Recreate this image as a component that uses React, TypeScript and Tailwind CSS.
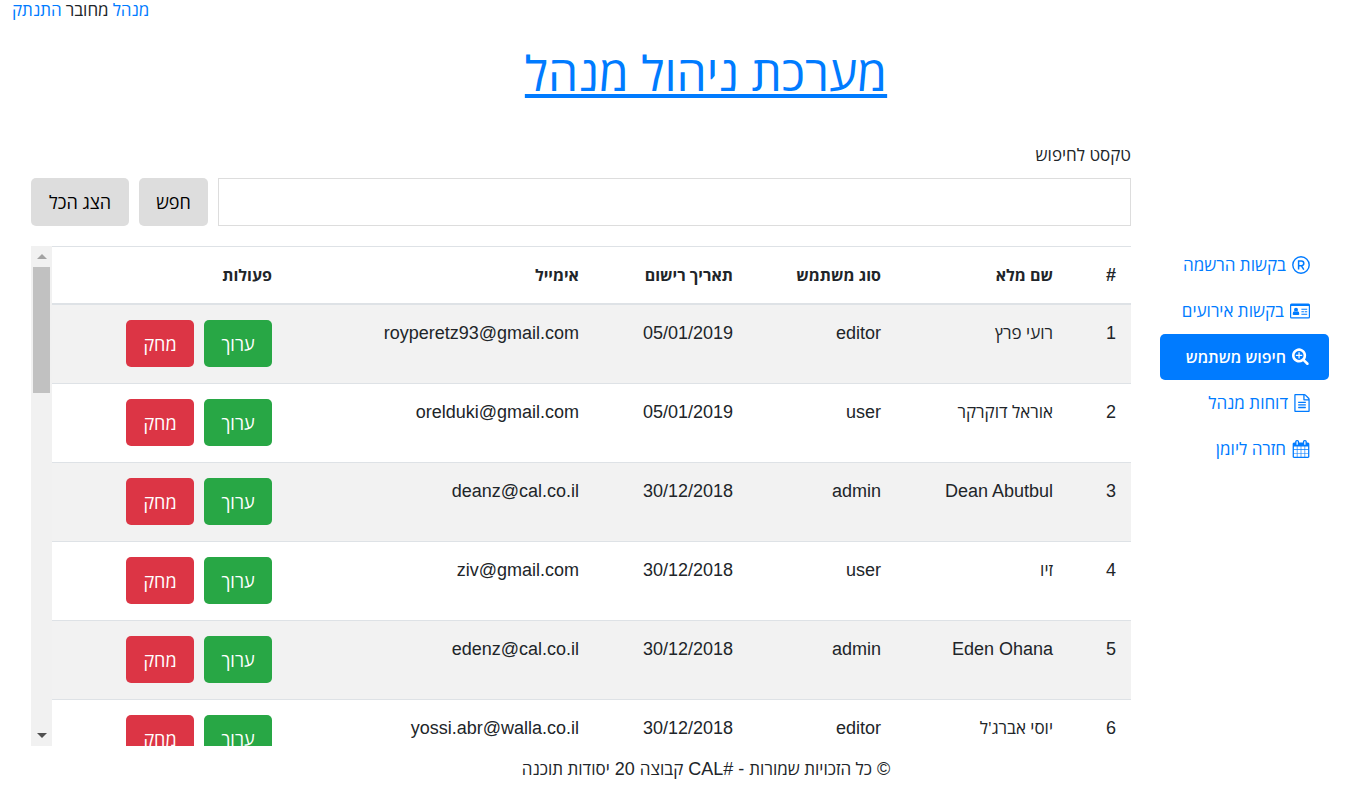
import { useRef, useState } from "react";
import type { ReactNode } from "react";

type User = { id: number; name: string; role: string; date: string; email: string };

const users: User[] = [
  { id: 1, name: "רועי פרץ", role: "editor", date: "05/01/2019", email: "royperetz93@gmail.com" },
  { id: 2, name: "אוראל דוקרקר", role: "user", date: "05/01/2019", email: "orelduki@gmail.com" },
  { id: 3, name: "Dean Abutbul", role: "admin", date: "30/12/2018", email: "deanz@cal.co.il" },
  { id: 4, name: "זיו", role: "user", date: "30/12/2018", email: "ziv@gmail.com" },
  { id: 5, name: "Eden Ohana", role: "admin", date: "30/12/2018", email: "edenz@cal.co.il" },
  { id: 6, name: "יוסי אברג'ל", role: "editor", date: "30/12/2018", email: "yossi.abr@walla.co.il" },
];

const he = "font-['Open_Sans','Liberation_Sans',sans-serif]";

function Glyph({ d, className }: { d: string; className: string }) {
  return (
    <svg viewBox="0 0 1792 1792" className={className} fill="currentColor" aria-hidden="true">
      <path d={d} />
    </svg>
  );
}

const searchPlus =
  "M1024 704v64q0 13-9.5 22.5t-22.5 9.5h-224v224q0 13-9.5 22.5t-22.5 9.5h-64q-13 0-22.5-9.5t-9.5-22.5v-224h-224q-13 0-22.5-9.5t-9.5-22.5v-64q0-13 9.5-22.5t22.5-9.5h224v-224q0-13 9.5-22.5t22.5-9.5h64q13 0 22.5 9.5t9.5 22.5v224h224q13 0 22.5 9.5t9.5 22.5zm128 32q0-185-131.5-316.5t-316.5-131.5-316.5 131.5-131.5 316.5 131.5 316.5 316.5 131.5 316.5-131.5 131.5-316.5zm512 832q0 53-37.5 90.5t-90.5 37.5q-54 0-90-38l-343-342q-179 124-399 124-143 0-273.5-55.5t-225-150-150-225-55.5-273.5 55.5-273.5 150-225 225-150 273.5-55.5 273.5 55.5 225 150 150 225 55.5 273.5q0 220-124 399l343 343q37 37 37 90z";
const fileText =
  "M1596 380q28 28 48 76t20 88v1152q0 40-28 68t-68 28h-1344q-40 0-68-28t-28-68v-1600q0-40 28-68t68-28h896q40 0 88 20t76 48zm-444-244v376h376q-10-29-22-41l-313-313q-12-12-41-22zm384 1528v-1024h-416q-40 0-68-28t-28-68v-416h-768v1536h1280zm-1024-864q0-14 9-23t23-9h704q14 0 23 9t9 23v64q0 14-9 23t-23 9h-704q-14 0-23-9t-9-23v-64zm736 224q14 0 23 9t9 23v64q0 14-9 23t-23 9h-704q-14 0-23-9t-9-23v-64q0-14 9-23t23-9h704zm0 256q14 0 23 9t9 23v64q0 14-9 23t-23 9h-704q-14 0-23-9t-9-23v-64q0-14 9-23t23-9h704z";
const calendar =
  "M192 1664h288v-288h-288v288zm352 0h320v-288h-320v288zm-352-352h288v-320h-288v320zm352 0h320v-320h-320v320zm-352-384h288v-288h-288v288zm736 736h320v-288h-320v288zm-384-736h320v-288h-320v288zm768 736h288v-288h-288v288zm-384-352h320v-320h-320v320zm-352-864v-288q0-13-9.5-22.5t-22.5-9.5h-64q-13 0-22.5 9.5t-9.5 22.5v288q0 13 9.5 22.5t22.5 9.5h64q13 0 22.5-9.5t9.5-22.5zm736 864h288v-320h-288v320zm-384-384h320v-288h-320v288zm384 0h288v-288h-288v288zm32-480v-288q0-13-9.5-22.5t-22.5-9.5h-64q-13 0-22.5 9.5t-9.5 22.5v288q0 13 9.5 22.5t22.5 9.5h64q13 0 22.5-9.5t9.5-22.5zm384-64v1280q0 52-38 90t-90 38h-1408q-52 0-90-38t-38-90v-1280q0-52 38-90t90-38h128v-96q0-66 47-113t113-47h64q66 0 113 47t47 113v96h384v-96q0-66 47-113t113-47h64q66 0 113 47t47 113v96h128q52 0 90 38t38 90z";

function RegisteredIcon() {
  return (
    <svg viewBox="0 0 18 18" className="size-[18px]" fill="none" stroke="currentColor" aria-hidden="true">
      <circle cx="9" cy="9" r="8.2" strokeWidth="1.4" />
      <path d="M6.6 13.6V4.9h2.8a2.4 2.4 0 0 1 0 4.8H6.6M9.3 9.7l2.5 3.9" strokeWidth="1.5" />
    </svg>
  );
}

function AddressCardIcon() {
  return (
    <svg viewBox="0 0 20 16" className="h-4 w-5" fill="currentColor" aria-hidden="true">
      <path
        fillRule="evenodd"
        d="M1.5 .5h17A1.5 1.5 0 0 1 20 2v12a1.5 1.5 0 0 1-1.5 1.5h-17A1.5 1.5 0 0 1 0 14V2A1.5 1.5 0 0 1 1.5 .5zM1.200 3v11q0 .3.3.3h17q.3 0 .3-.3V3z"
      />
      <circle cx="6" cy="6.800" r="2" />
      <path d="M4.300 8.300q1.700 1.400 3.400 0 1.600.3 1.600 2.700 0 1-1 1H3.700q-1 0-1-1 0-2.400 1.600-2.700z" />
      <path d="M11.4 5.700h5.800v1.100h-5.800zM11.400 8.200h2.500v1.100h-2.500zM14.700 8.200h2.500v1.100h-2.500zM11.400 10.700h5.800v1.100h-5.800z" />
    </svg>
  );
}

const nav: { label: string; icon: ReactNode; active?: boolean }[] = [
  { label: "בקשות הרשמה", icon: <RegisteredIcon /> },
  { label: "בקשות אירועים", icon: <AddressCardIcon /> },
  { label: "חיפוש משתמש", icon: <Glyph d={searchPlus} className="size-[18px]" />, active: true },
  { label: "דוחות מנהל", icon: <Glyph d={fileText} className="-mx-px size-[18px]" /> },
  { label: "חזרה ליומן", icon: <Glyph d={calendar} className="size-[18px]" /> },
];

function UserTable() {
  const box = useRef<HTMLDivElement>(null);
  const [offset, setOffset] = useState(0);

  const onScroll = () => {
    const el = box.current;
    if (!el) return;
    const range = el.scrollHeight - el.clientHeight;
    setOffset(range > 0 ? (el.scrollTop / range) * 332 : 0);
  };
  const step = (dy: number) => box.current?.scrollBy({ top: dy });

  return (
    <div className="mt-5 flex h-[500px]">
      <div
        ref={box}
        onScroll={onScroll}
        className="min-w-0 flex-1 overflow-y-auto [scrollbar-width:none]"
      >
        <table className="w-full table-fixed border-separate border-spacing-0 text-right leading-[26px]">
          <colgroup>
            <col className="w-[63px]" />
            <col className="w-[172px]" />
            <col className="w-[148px]" />
            <col className="w-[154px]" />
            <col className="w-[307px]" />
            <col />
          </colgroup>
          <thead>
            <tr>
              {["#", "שם מלא", "סוג משתמש", "תאריך רישום", "אימייל", "פעולות"].map((h) => (
                <th
                  key={h}
                  scope="col"
                  className={`border-y border-[#dee2e6] px-[15px] py-[15px] font-bold ${
                    h === "#" ? "" : `text-base leading-[26px] ${he}`
                  }`}
                >
                  {h}
                </th>
              ))}
            </tr>
          </thead>
          <tbody className="[&_td]:border-t [&_td]:border-[#dee2e6] [&_td]:px-[15px] [&_td]:pt-[15px] [&_td]:pb-4 [&_td]:align-top">
            {users.map((u) => (
              <tr key={u.id} className="odd:bg-[#f2f2f2]">
                <td>{u.id}</td>
                <td className={/[A-Z]/.test(u.name) ? "" : `text-[17px] leading-[26px] ${he}`}>{u.name}</td>
                <td>{u.role}</td>
                <td>{u.date}</td>
                <td>{u.email}</td>
                <td>
                  <div className={`flex gap-[10px] text-lg font-medium text-white ${he}`}>
                    <button type="button" className="h-[47px] w-[68px] rounded-[5px] bg-[#28a745]">
                      ערוך
                    </button>
                    <button type="button" className="h-[47px] w-[68px] rounded-[5px] bg-[#dc3545]">
                      מחק
                    </button>
                  </div>
                </td>
              </tr>
            ))}
          </tbody>
        </table>
      </div>
      <div className="flex w-[21px] flex-col items-center bg-[#f1f1f1]">
        <button
          type="button"
          aria-label="גלילה למעלה"
          onClick={() => step(-79)}
          className="flex h-[21px] w-full items-center justify-center text-[#a3a3a3]"
        >
          <svg viewBox="0 0 10 5" className="h-[5px] w-[10px]" fill="currentColor" aria-hidden="true">
            <path d="M0 5 5 0l5 5z" />
          </svg>
        </button>
        <div className="w-[17px] flex-1">
          <div className="h-[126px] bg-[#c1c1c1]" style={{ transform: `translateY(${offset}px)` }} />
        </div>
        <button
          type="button"
          aria-label="גלילה למטה"
          onClick={() => step(79)}
          className="flex h-[21px] w-full items-center justify-center text-[#505050]"
        >
          <svg viewBox="0 0 10 5" className="h-[5px] w-[10px]" fill="currentColor" aria-hidden="true">
            <path d="M0 0h10L5 5z" />
          </svg>
        </button>
      </div>
    </div>
  );
}

export default function App() {
  return (
    <div
      dir="rtl"
      className="bg-white font-['Liberation_Sans',Arial,sans-serif] text-[18px] text-[#212529]"
    >
      <div className={`flex h-5 items-center justify-end gap-1 pl-3 text-[17px] leading-5 ${he}`}>
        <a href="#admin" className="text-[#007bff]">מנהל</a>
        <span>מחובר</span>
        <a href="#logout" className="text-[#007bff]">התנתק</a>
      </div>

      <h1 className={`mt-5 pl-14 text-center text-[48px] leading-[66px] ${he}`}>
        <a href="#home" className="text-[#007bff] underline">מערכת ניהול מנהל</a>
      </h1>

      <div className="mt-9 flex gap-[29px] pr-[27px] pl-[31px]">
        <nav className="mt-[100px] w-[169px] shrink-0">
          {nav.map((n) => (
            <a
              key={n.label}
              href="#section"
              aria-current={n.active ? "page" : undefined}
              className={`flex h-[46px] items-center gap-[6px] rounded-[5px] pr-[19px] whitespace-nowrap ${he} ${
                n.active ? "bg-[#007bff] text-base font-semibold text-white" : "text-[17px] text-[#007bff]"
              }`}
            >
              {n.icon}
              {n.label}
            </a>
          ))}
        </nav>

        <main className="min-w-0 flex-1">
          <label htmlFor="query" className={`block text-[17px] leading-[26px] ${he}`}>
            טקסט לחיפוש
          </label>
          <div className="mt-[10px] flex gap-[10px]">
            <input
              id="query"
              type="text"
              className={`h-12 min-w-0 flex-1 border border-[#ddd] bg-white px-3 outline-none ${he}`}
            />
            <button type="button" className={`w-[69px] rounded-[5px] bg-[#ddd] text-lg text-black ${he}`}>
              חפש
            </button>
            <button type="button" className={`w-[98px] rounded-[5px] bg-[#ddd] text-lg text-black ${he}`}>
              הצג הכל
            </button>
          </div>
          <UserTable />
        </main>
      </div>

      <footer className="mt-[10px] pl-14 text-center leading-[26px]">
        © <span className={`text-[17px] ${he}`}>כל הזכויות שמורות</span> - #CAL{" "}
        <span className={`text-[17px] ${he}`}>קבוצה</span> 20{" "}
        <span className={`text-[17px] ${he}`}>יסודות תוכנה</span>
      </footer>
    </div>
  );
}
